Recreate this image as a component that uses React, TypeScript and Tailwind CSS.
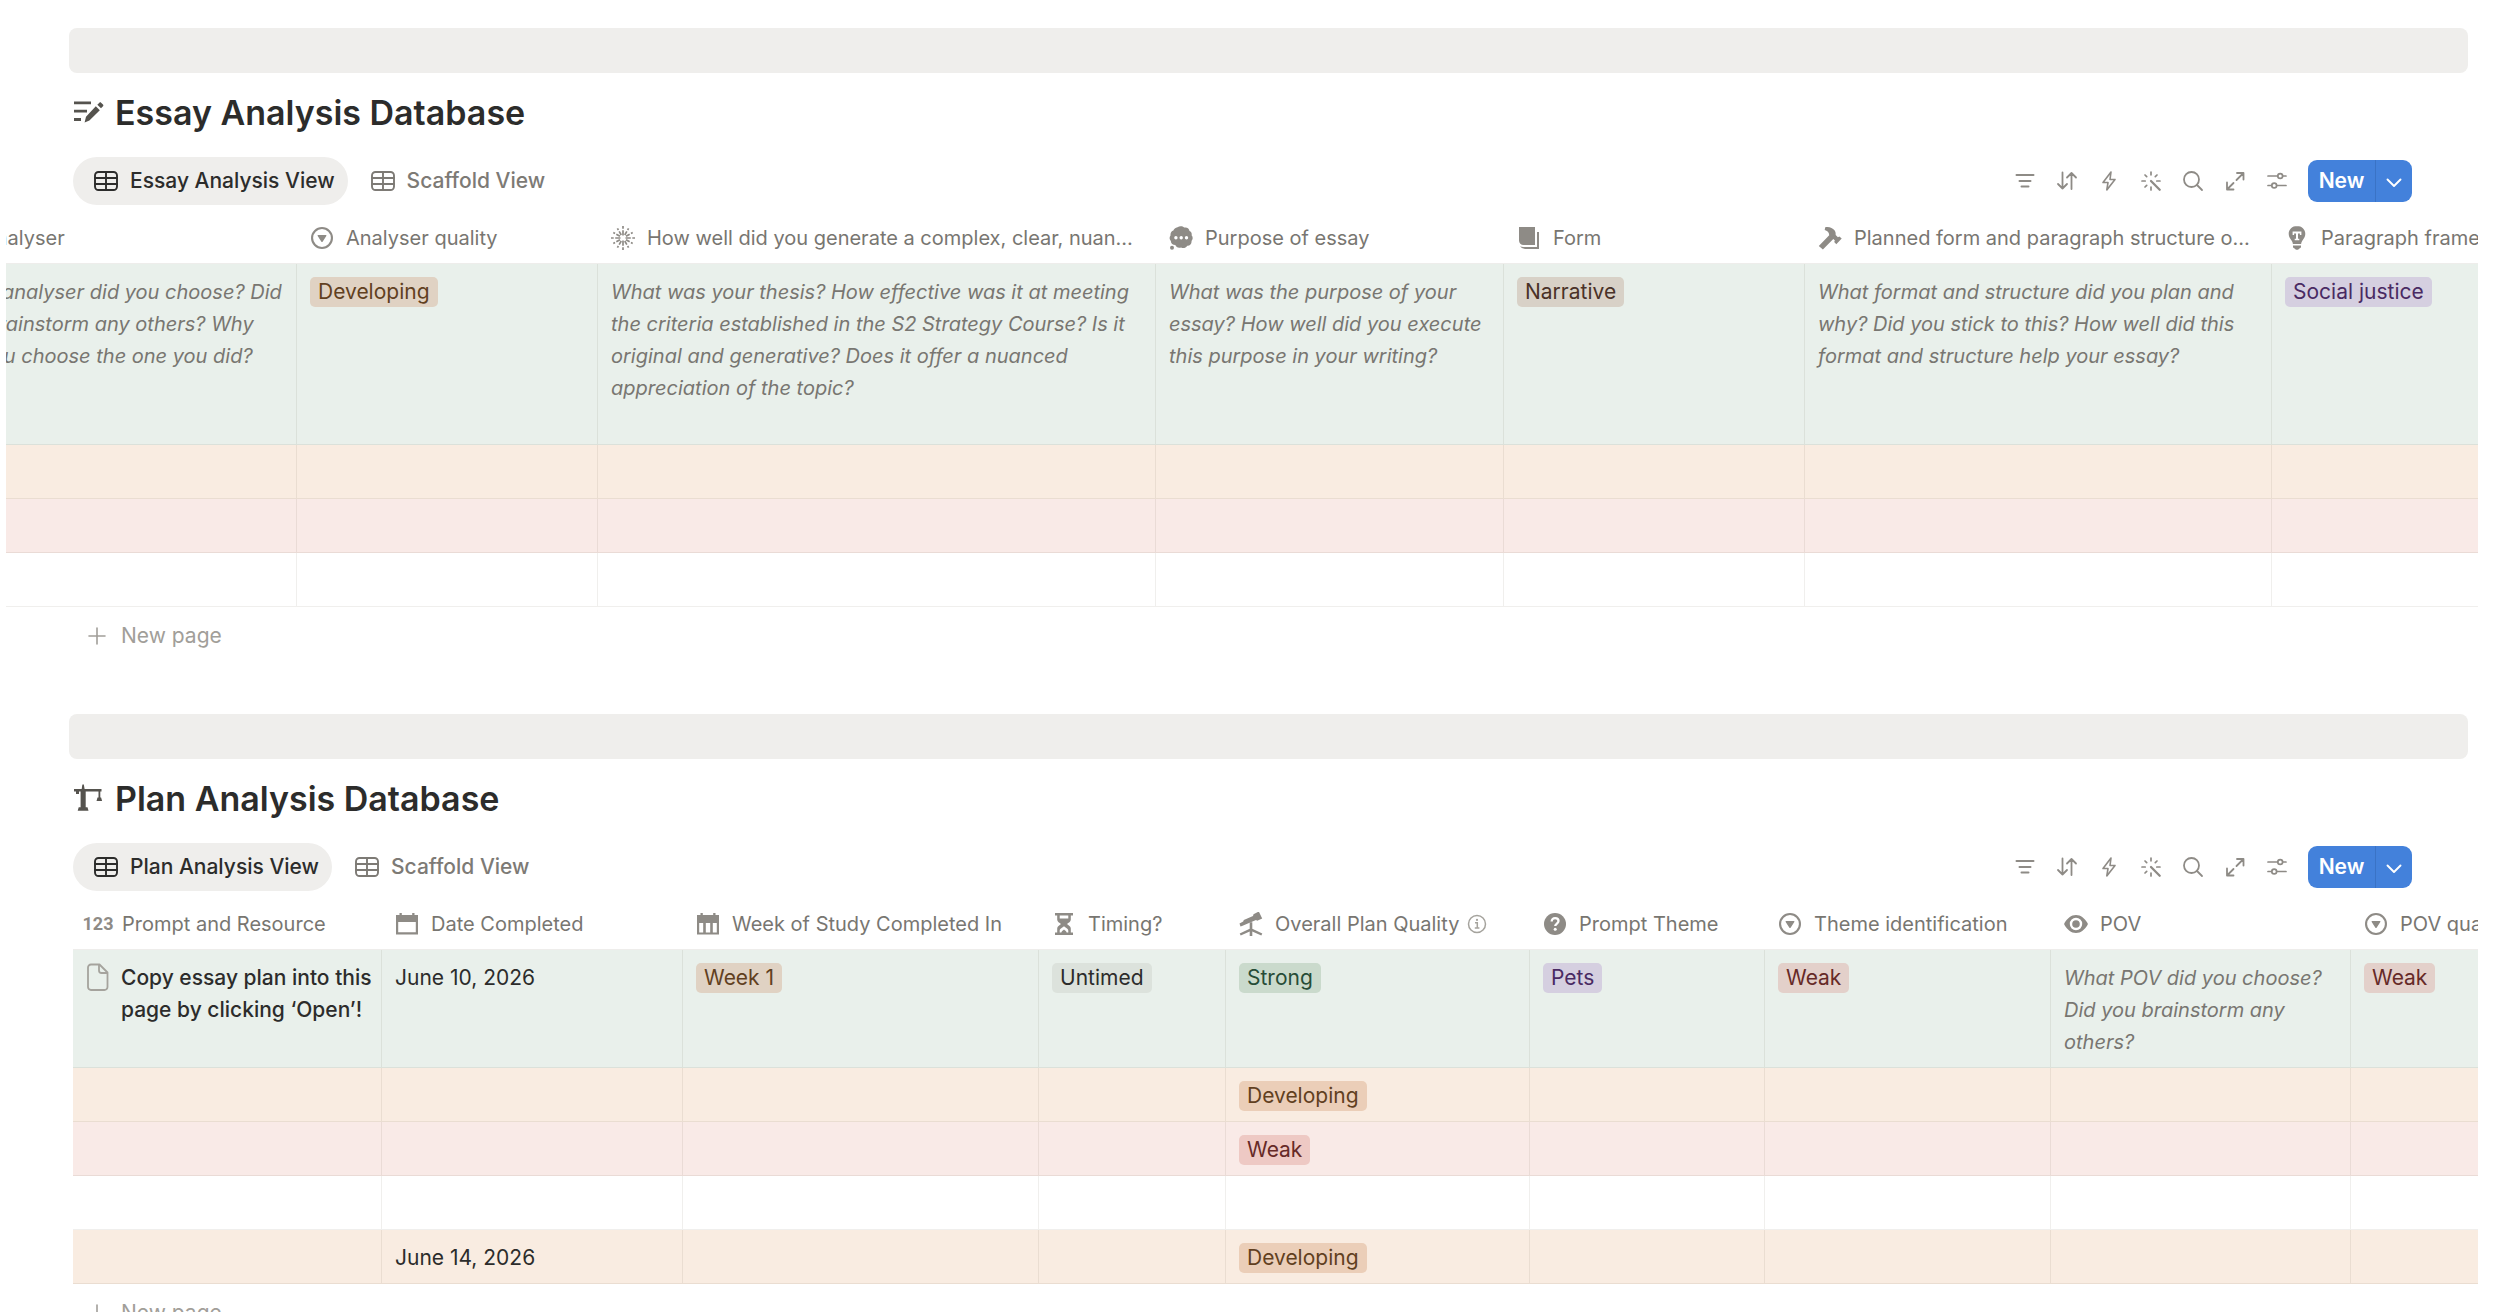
import type { ReactNode } from "react";

type Tone = "green" | "orange" | "red" | "none";

interface Column {
  label: string;
  width: string;
  icon: ReactNode;
  info?: boolean;
}

interface Row {
  tone: Tone;
  height: string;
  cells: ReactNode[];
}

interface Database {
  title: string;
  icon: ReactNode;
  activeView: string;
  offset: string;
  tableOffset: string;
  columns: Column[];
  rows: Row[];
}

const ROW_TONES: Record<Tone, string> = {
  green: "bg-[#e9f0eb]",
  orange: "bg-[#f9ece1]",
  red: "bg-[#f9eae7]",
  none: "bg-white",
};

const TAG_TONES = {
  orangeOnGreen: "bg-[#e0d2c3] text-[#61401f]",
  brownOnGreen: "bg-[#d8d1c7] text-[#4a3228]",
  purpleOnGreen: "bg-[#d5cfe0] text-[#492a63]",
  grayOnGreen: "bg-[#dce2dc] text-[#2c2c2b]",
  greenOnGreen: "bg-[#cadacc] text-[#264c37]",
  redOnGreen: "bg-[#e3d0ca] text-[#662a27]",
  orangeOnOrange: "bg-[#ebceb8] text-[#61401f]",
  redOnRed: "bg-[#eec9c4] text-[#662a27]",
};

/* ---------- icons ---------- */

function Glyph({ children }: { children: ReactNode }) {
  return (
    <svg className="size-6 shrink-0" viewBox="0 0 24 24" fill="currentColor" aria-hidden="true">
      {children}
    </svg>
  );
}

function LineGlyph({ children, weight = 1.8 }: { children: ReactNode; weight?: number }) {
  return (
    <svg
      className="size-6 shrink-0"
      viewBox="0 0 24 24"
      fill="none"
      stroke="currentColor"
      strokeWidth={weight}
      strokeLinecap="round"
      strokeLinejoin="round"
      aria-hidden="true"
    >
      {children}
    </svg>
  );
}

const TableIcon = () => (
  <LineGlyph weight={1.9}>
    <rect x="1" y="3" width="22" height="18" rx="3.5" />
    <path d="M1 9h22M1 15h22M12 3v18" />
  </LineGlyph>
);

const SelectIcon = () => (
  <Glyph>
    <path
      fillRule="evenodd"
      d="M12 1a11 11 0 1 0 0 22 11 11 0 0 0 0-22Zm0 2.1a8.9 8.9 0 1 1 0 17.8 8.9 8.9 0 0 1 0-17.8Z"
    />
    <path d="M8.3 9h7.4c.6 0 .9.6.6 1.1l-3.7 5.6c-.3.5-.9.5-1.2 0l-3.7-5.6c-.3-.5 0-1.1.6-1.1Z" />
  </Glyph>
);

const BurstIcon = () => (
  <svg className="size-6 shrink-0" viewBox="0 0 24 24" stroke="currentColor" strokeWidth="1.7" aria-hidden="true">
    {Array.from({ length: 12 }, (_, i) => (
      <path key={i} d={i % 3 ? "M12 8.500V4.300M12 2.800V.8" : "M12 9.500V4.200M12 2.700V0"} transform={`rotate(${i * 30} 12 12)`} />
    ))}
  </svg>
);

const ThoughtIcon = () => (
  <Glyph>
    <path
      fillRule="evenodd"
      d="M8.500 1.200c2-1.400 5.200-1.300 6.700.4 2.600-.8 5.200.9 5.300 3.500 1.800.8 2.600 2.500 2.100 4.200 1.500 1.500 1.400 4.300-.1 5.700.4 2.700-1.500 4.900-4.200 4.700-1.400 2.200-4.200 3-6.200 1.700-2.500 1.100-5-.1-5.800-2.300C3.700 19.100 1.700 17.400 1.900 15 .3 13.500.2 11 1.500 9.400 1.300 7 2.400 5 4.400 4.600 4.800 2.900 6.500 1.500 8.500 1.200ZM6.900 10.100a1.700 1.700 0 1 0 0 3.400 1.700 1.700 0 0 0 0-3.400Zm5.300 0a1.700 1.700 0 1 0 0 3.400 1.700 1.700 0 0 0 0-3.400Zm5.300 0a1.700 1.700 0 1 0 0 3.400 1.700 1.700 0 0 0 0-3.400Z"
    />
    <circle cx="3" cy="21.700" r="2" />
  </Glyph>
);

const PagesIcon = () => (
  <Glyph>
    <path d="M2 1h16v18H6.500A4.500 4.500 0 0 1 2 14.500Z" />
    <path d="M20 6h2v17H8a6 6 0 0 1-5-2.700c1 .5 2 .8 3.300.8H20Z" />
  </Glyph>
);

const HammerIcon = () => (
  <Glyph>
    <path d="M7.200 1.200c4-.8 7.200.5 9.300 3.100 1.200 1.500 1.200 3.200 1.200 4.700l2.200 2.300 1.500-.8 2.300 2.100-5.400 5.600-2.100-2.100.7-1.600-1.600-1.500L4.900 23.500.8 20 11.200 9.200c-.2-2.200-.9-4-4.500-5.100Z" />
  </Glyph>
);

const BulbIcon = () => (
  <Glyph>
    <path
      fillRule="evenodd"
      d="M12 0C7.300 0 3.700 3.500 3.700 8c0 3 1.700 4.900 3 6.700.7 1 1 2 1.200 3.200h8.200c.2-1.200.5-2.200 1.200-3.200 1.300-1.800 3-3.700 3-6.700 0-4.500-3.600-8-8.300-8ZM7.600 5.500h8.800v3.600h-1.500V7.400h-1.900v5.400h1.300v1.400H9.700v-1.400H11V7.400H9.100v1.700H7.600Z"
    />
    <path d="M8 19.400h8v1.300c0 .8-.5 1.300-1.200 1.500L13 23.800h-2l-1.800-1.600C8.500 22 8 21.500 8 20.700Z" />
  </Glyph>
);

const CalendarIcon = () => (
  <Glyph>
    <path fillRule="evenodd" d="M4.500 1h2.300v2h10.400V1h2.300v2H23v19.500H1V3h3.500ZM3.200 10v10.300h17.600V10Z" />
  </Glyph>
);

const WeekIcon = () => (
  <Glyph>
    <path
      fillRule="evenodd"
      d="M4.500 1h2.300v2h10.400V1h2.300v2H23v19.500H1V3h3.500ZM3.200 11v9.400h4V11Zm6.600 0v9.400h4.400V11Zm7 0v9.400h4V11Z"
    />
  </Glyph>
);

const HourglassIcon = () => (
  <Glyph>
    <path
      fillRule="evenodd"
      d="M3 1h18v2.600h-2.200v4.200c0 2-2.300 3-3.800 4.200 1.500 1.200 3.800 2.400 3.800 4.400v4H21V23H3v-2.600h2.200v-4c0-2 2.300-3.200 3.800-4.400-1.500-1.200-3.800-2.200-3.800-4.200V3.600H3Zm4.700 2.600v2.800h8.600V3.600ZM12 14.200c-1.500 1.400-4.300 2.300-4.300 4.500v1.700h1.600c.5-1.400 1.700-1.900 2.700-2.900 1 1 2.200 1.500 2.700 2.900h1.600v-1.700c0-2.200-2.800-3.100-4.300-4.500Z"
    />
  </Glyph>
);

const TelescopeIcon = () => (
  <Glyph>
    <path d="M14.500 2.300 19.800-.5l3.400 7-5 2.300-1.200-.8L3 13.900l-1.500.7L.5 11.400l3.700-1.900.6-1.400L14 4Z" />
    <path d="M10.700 10.300h2.600v6.500l10 4.600-1 2.200-9-4.200V24h-2.600v-4.600l-9 4.200-1-2.200 10-4.600Z" />
  </Glyph>
);

const InfoIcon = () => (
  <svg className="size-5 shrink-0 text-[#a5a39d]" viewBox="0 0 20 20" fill="none" stroke="currentColor" strokeWidth="1.500" aria-hidden="true">
    <circle cx="10" cy="10" r="8.500" />
    <path d="M8 8.700h2.300v5M7.800 14h4.600" />
    <circle cx="10" cy="5.900" r="1.100" fill="currentColor" stroke="none" />
  </svg>
);

const QuestionIcon = () => (
  <Glyph>
    <circle cx="12" cy="12" r="11" />
    <path d="M8.700 9.500c0-2.200 1.400-3.400 3.400-3.400s3.400 1.200 3.400 3c0 2.400-3.300 2.500-3.300 5" fill="none" stroke="#fff" strokeWidth="2.300" />
    <circle cx="12.200" cy="17.300" r="1.500" fill="#fff" />
  </Glyph>
);

const EyeIcon = () => (
  <Glyph>
    <path
      fillRule="evenodd"
      d="M12 3c5 0 8.600 3.500 11.500 8 .4.600.4 1.400 0 2-2.900 4.500-6.500 8-11.500 8S3.400 17.500.5 13a1.900 1.900 0 0 1 0-2C3.400 6.500 7 3 12 3Zm0 2.800a6.200 6.200 0 1 0 0 12.400 6.200 6.200 0 0 0 0-12.400Z"
    />
    <circle cx="12" cy="12" r="3.800" />
  </Glyph>
);

const NumbersIcon = () => (
  <span className="flex w-6 shrink-0 justify-center font-['Roboto',sans-serif] text-lg leading-6 font-bold" aria-hidden="true">
    123
  </span>
);

const PageIcon = () => (
  <svg className="h-8 w-6 shrink-0 text-[#a5a39d]" viewBox="0 0 24 32" fill="none" stroke="currentColor" strokeWidth="1.800" strokeLinejoin="round" aria-hidden="true">
    <path d="M5 2.500h8.500l8 8V25a3 3 0 0 1-3 3H5a3 3 0 0 1-3-3V5.500a3 3 0 0 1 3-3Z" />
    <path d="M13 3v5.500A2.500 2.500 0 0 0 15.500 11H21" />
  </svg>
);

const NotesPencilIcon = () => (
  <svg className="size-8 shrink-0" viewBox="0 0 32 32" fill="currentColor" aria-hidden="true">
    <path d="M1 4.500h17v2.800H1ZM1 12.800h13v2.800H1ZM1 21.100h7v2.800H1Z" />
    <path d="m22.800 9.300 4 4L16.400 23.600 11.600 25.500l1.400-5.700ZM26.400 5.700c.5-.5 1.200-.5 1.700 0l1.900 1.900c.5.500.5 1.200 0 1.700L28 11.300l-3.700-3.600Z" />
  </svg>
);

const CraneIcon = () => (
  <svg className="size-8 shrink-0" viewBox="0 0 32 32" fill="currentColor" aria-hidden="true">
    <path d="M8.700 6 9.300 1.900c.2-1 1.400-1 1.600 0l.7 4.100H28.500v2.500h-1.200v6h.8l1 3.500h-5.600l1-3.500h1V8.500H12.700v15.700h1.800l1 3.500H4.700l1-3.500h1.900V8.500H6v2.600H3V8.500H1V6Z" />
  </svg>
);

const TOOLS = [
  { name: "Filter", icon: <LineGlyph weight={2}><path d="M3.500 6h17M6.500 12h11M8.500 17.500h7" /></LineGlyph> },
  { name: "Sort", icon: <LineGlyph><path d="M7.500 3.500v16M3 15l4.500 4.500L12 15M16.500 20V4M12 8.500 16.500 4 21 8.500" /></LineGlyph> },
  { name: "Automations", icon: <LineGlyph weight={1.600}><path d="M14 3 6 13.500h5L9.800 21 18 10.500h-5Z" /></LineGlyph> },
  {
    name: "Ask AI",
    icon: (
      <LineGlyph weight={1.700}>
        <path d="M12 3v2.800M3 12h3.200M17.800 12H21M12 18v3M6 6l1.700 1.700M18 6l-1.700 1.700M6 18l1.700-1.700" />
        <path d="m12 12 8.700 8.700" strokeWidth="2.300" />
      </LineGlyph>
    ),
  },
  { name: "Search", icon: <LineGlyph><circle cx="10.500" cy="10.500" r="7.500" /><path d="m16 16 5 5" /></LineGlyph> },
  {
    name: "Open full page",
    icon: <LineGlyph><path d="M14 4h6.500v6.500M20 4.500l-6.500 6.500M10.500 14 4.500 20M4 13.500V20.500h6.500" /></LineGlyph>,
  },
  {
    name: "Settings",
    icon: (
      <LineGlyph weight={1.700}>
        <path d="M3 7h9.500M18 7h3M3 16.500h3.500M12 16.500h9" />
        <circle cx="15.200" cy="7" r="2.400" />
        <circle cx="9.200" cy="16.500" r="2.400" />
      </LineGlyph>
    ),
  },
];

/* ---------- cell content ---------- */

function Tag({ tone, children }: { tone: keyof typeof TAG_TONES; children: string }) {
  return <span className={`inline-block rounded-[5px] px-2 leading-[30px] whitespace-nowrap ${TAG_TONES[tone]}`}>{children}</span>;
}

function Prompt({ lines }: { lines: string[] }) {
  return (
    <p className="text-xl leading-8 text-[#787671] italic">
      {lines.map((line) => (
        <span key={line} className="block whitespace-nowrap">{line}</span>
      ))}
    </p>
  );
}

const databases: Database[] = [
  {
    title: "Essay Analysis Database",
    icon: <NotesPencilIcon />,
    activeView: "Essay Analysis View",
    offset: "ml-[6px]",
    tableOffset: "-ml-[73px]",
    columns: [
      { label: "Analyser", width: "w-[364px]", icon: <SelectIcon /> },
      { label: "Analyser quality", width: "w-[301px]", icon: <SelectIcon /> },
      { label: "How well did you generate a complex, clear, nuan…", width: "w-[558px]", icon: <BurstIcon /> },
      { label: "Purpose of essay", width: "w-[348px]", icon: <ThoughtIcon /> },
      { label: "Form", width: "w-[301px]", icon: <PagesIcon /> },
      { label: "Planned form and paragraph structure o…", width: "w-[467px]", icon: <HammerIcon /> },
      { label: "Paragraph framework", width: "w-[300px]", icon: <BulbIcon /> },
    ],
    rows: [
      {
        tone: "green",
        height: "h-[181px]",
        cells: [
          <Prompt lines={["What analyser did you choose? Did", "you brainstorm any others? Why", "did you choose the one you did?"]} />,
          <Tag tone="orangeOnGreen">Developing</Tag>,
          <Prompt
            lines={[
              "What was your thesis? How effective was it at meeting",
              "the criteria established in the S2 Strategy Course? Is it",
              "original and generative? Does it offer a nuanced",
              "appreciation of the topic?",
            ]}
          />,
          <Prompt lines={["What was the purpose of your", "essay? How well did you execute", "this purpose in your writing?"]} />,
          <Tag tone="brownOnGreen">Narrative</Tag>,
          <Prompt lines={["What format and structure did you plan and", "why? Did you stick to this? How well did this", "format and structure help your essay?"]} />,
          <Tag tone="purpleOnGreen">Social justice</Tag>,
        ],
      },
      { tone: "orange", height: "h-[54px]", cells: [] },
      { tone: "red", height: "h-[54px]", cells: [] },
      { tone: "none", height: "h-[54px]", cells: [] },
    ],
  },
  {
    title: "Plan Analysis Database",
    icon: <CraneIcon />,
    activeView: "Plan Analysis View",
    offset: "ml-[73px]",
    tableOffset: "ml-0",
    columns: [
      { label: "Prompt and Resource", width: "w-[309px]", icon: <NumbersIcon /> },
      { label: "Date Completed", width: "w-[301px]", icon: <CalendarIcon /> },
      { label: "Week of Study Completed In", width: "w-[356px]", icon: <WeekIcon /> },
      { label: "Timing?", width: "w-[187px]", icon: <HourglassIcon /> },
      { label: "Overall Plan Quality", width: "w-[304px]", icon: <TelescopeIcon />, info: true },
      { label: "Prompt Theme", width: "w-[235px]", icon: <QuestionIcon /> },
      { label: "Theme identification", width: "w-[286px]", icon: <SelectIcon /> },
      { label: "POV", width: "w-[300px]", icon: <EyeIcon /> },
      { label: "POV quality", width: "w-[300px]", icon: <SelectIcon /> },
    ],
    rows: [
      {
        tone: "green",
        height: "h-[118px]",
        cells: [
          <div className="flex gap-[11px] font-medium">
            <PageIcon />
            <p>
              <span className="block whitespace-nowrap">Copy essay plan into this</span>
              <span className="block whitespace-nowrap">page by clicking ‘Open’!</span>
            </p>
          </div>,
          "June 10, 2026",
          <Tag tone="orangeOnGreen">Week 1</Tag>,
          <Tag tone="grayOnGreen">Untimed</Tag>,
          <Tag tone="greenOnGreen">Strong</Tag>,
          <Tag tone="purpleOnGreen">Pets</Tag>,
          <Tag tone="redOnGreen">Weak</Tag>,
          <Prompt lines={["What POV did you choose?", "Did you brainstorm any", "others?"]} />,
          <Tag tone="redOnGreen">Weak</Tag>,
        ],
      },
      { tone: "orange", height: "h-[54px]", cells: ["", "", "", "", <Tag tone="orangeOnOrange">Developing</Tag>] },
      { tone: "red", height: "h-[54px]", cells: ["", "", "", "", <Tag tone="redOnRed">Weak</Tag>] },
      { tone: "none", height: "h-[54px]", cells: [] },
      { tone: "orange", height: "h-[54px]", cells: ["", "June 14, 2026", "", "", <Tag tone="orangeOnOrange">Developing</Tag>] },
    ],
  },
];

/* ---------- page parts ---------- */

function Toolbar() {
  return (
    <div className="flex items-center text-[#8e8b86]">
      {TOOLS.map((tool) => (
        <button key={tool.name} type="button" aria-label={tool.name} className="flex h-[42px] w-[42px] items-center justify-center">
          {tool.icon}
        </button>
      ))}
      <div className="ml-[10px] flex h-[42px] overflow-hidden rounded-[9px] bg-[#4381db] text-white">
        <button type="button" className="w-[68px] border-r border-[#3a73c6] font-semibold">New</button>
        <button type="button" aria-label="More new options" className="flex w-9 items-center justify-center">
          <svg className="h-5 w-4" viewBox="0 0 16 20" fill="none" stroke="currentColor" strokeWidth="1.900" strokeLinecap="round" strokeLinejoin="round" aria-hidden="true">
            <path d="m1.500 8.500 6.500 6.500 6.500-6.500" />
          </svg>
        </button>
      </div>
    </div>
  );
}

function DatabaseSection({ db }: { db: Database }) {
  return (
    <section className="mb-[53px]">
      <div className="mr-8 ml-[69px] h-[45px] rounded-lg bg-[#efeeec]" />

      <h2 className="mt-4 ml-[73px] flex h-12 items-center gap-[10px] text-[34px] font-semibold whitespace-nowrap">
        <span className="text-[#55534e]">{db.icon}</span>
        {db.title}
      </h2>

      <div className="mt-5 mr-[88px] ml-[73px] flex h-12 items-center justify-between">
        <div className="flex h-full gap-[2px] font-medium">
          <button type="button" className="flex items-center gap-3 rounded-full bg-[#efeeec] pr-[13px] pl-[21px]">
            <TableIcon />
            {db.activeView}
          </button>
          <button type="button" className="flex items-center gap-3 rounded-full pr-[13px] pl-[21px] text-[#7d7a75]">
            <TableIcon />
            Scaffold View
          </button>
        </div>
        <Toolbar />
      </div>

      <div className={`mt-1 mr-[22px] overflow-hidden ${db.offset}`}>
        <table className={`w-px table-fixed border-separate border-spacing-0 ${db.tableOffset}`}>
          <thead>
            <tr>
              {db.columns.map((col) => (
                <th
                  key={col.label}
                  scope="col"
                  className={`h-[55px] border-b border-[#eeedeb] p-0 pt-[3px] pl-[13px] text-left text-xl leading-8 font-normal text-[#787671] ${col.width}`}
                >
                  <span className="flex items-center gap-3 whitespace-nowrap">
                    <span className="text-[#8e8b86]">{col.icon}</span>
                    <span className="flex items-center gap-2">
                      {col.label}
                      {col.info && <InfoIcon />}
                    </span>
                  </span>
                </th>
              ))}
            </tr>
          </thead>
          <tbody>
            {db.rows.map((row, r) => (
              <tr key={r} className={ROW_TONES[row.tone]}>
                {db.columns.map((col, c) => (
                  <td key={col.label} className={`border-r border-b border-[#2a1c0012] p-0 align-top ${row.height}`}>
                    {row.cells[c] && <div className="pt-3 pl-[13px]">{row.cells[c]}</div>}
                  </td>
                ))}
              </tr>
            ))}
          </tbody>
        </table>
      </div>

      <button type="button" className="ml-[73px] flex h-[54px] items-center gap-3 pt-1 pl-3 text-[#a19e99]">
        <LineGlyph weight={1.600}>
          <path d="M12 4v16M4 12h16" />
        </LineGlyph>
        New page
      </button>
    </section>
  );
}

export default function App() {
  return (
    <main className="h-screen overflow-hidden bg-white pt-7 font-['Inter',sans-serif] text-[21px] leading-8 text-[#2c2c2b]">
      {databases.map((db) => (
        <DatabaseSection key={db.title} db={db} />
      ))}
    </main>
  );
}
